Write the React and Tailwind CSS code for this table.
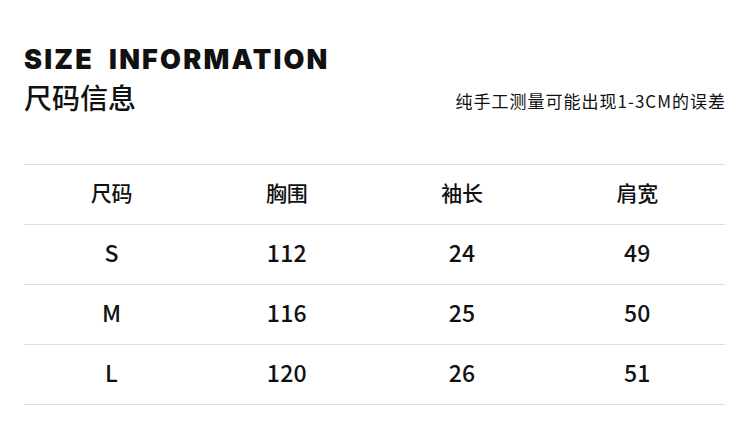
export default function App() {
  const rows = [
    ["S", "112", "24", "49"],
    ["M", "116", "25", "50"],
    ["L", "120", "26", "51"],
  ];
  const head = ["尺码", "胸围", "袖长", "肩宽"];
  const cjk = { fontFamily: '"Noto Sans CJK SC", "Noto Sans", sans-serif' };
  return (
    <div className="w-[750px] h-[446px] bg-white text-[#111] px-6 pt-[46px]" style={cjk}>
      <div
        className="text-[27px] leading-[27px] font-black tracking-[2.2px]"
        style={{ fontFamily: 'Inter, "Noto Sans", sans-serif' }}
      >
        SIZE&nbsp; INFORMATION
      </div>
      <div className="flex items-end justify-between mt-[6px]">
        <div className="text-[28px] leading-[36px] font-medium">尺码信息</div>
        <div className="text-[17px] leading-[20px] mb-[4px] tracking-[1px]">纯手工测量可能出现1-3CM的误差</div>
      </div>
      <div className="mt-[49px] w-[701px] border-t border-[#dedede]">
        <div className="grid grid-cols-4 h-[60px] items-center pb-[4px] border-b border-[#dedede] text-[21px] font-medium">
          {head.map((h) => (
            <div key={h} className="text-center">{h}</div>
          ))}
        </div>
        {rows.map((r) => (
          <div key={r[0]} className="grid grid-cols-4 h-[60px] items-center pb-[5px] border-b border-[#dedede] text-[23px] font-medium">
            {r.map((c, i) => (
              <div key={i} className="text-center leading-[30px] tracking-[0.3px]">{c}</div>
            ))}
          </div>
        ))}
      </div>
    </div>
  );
}
